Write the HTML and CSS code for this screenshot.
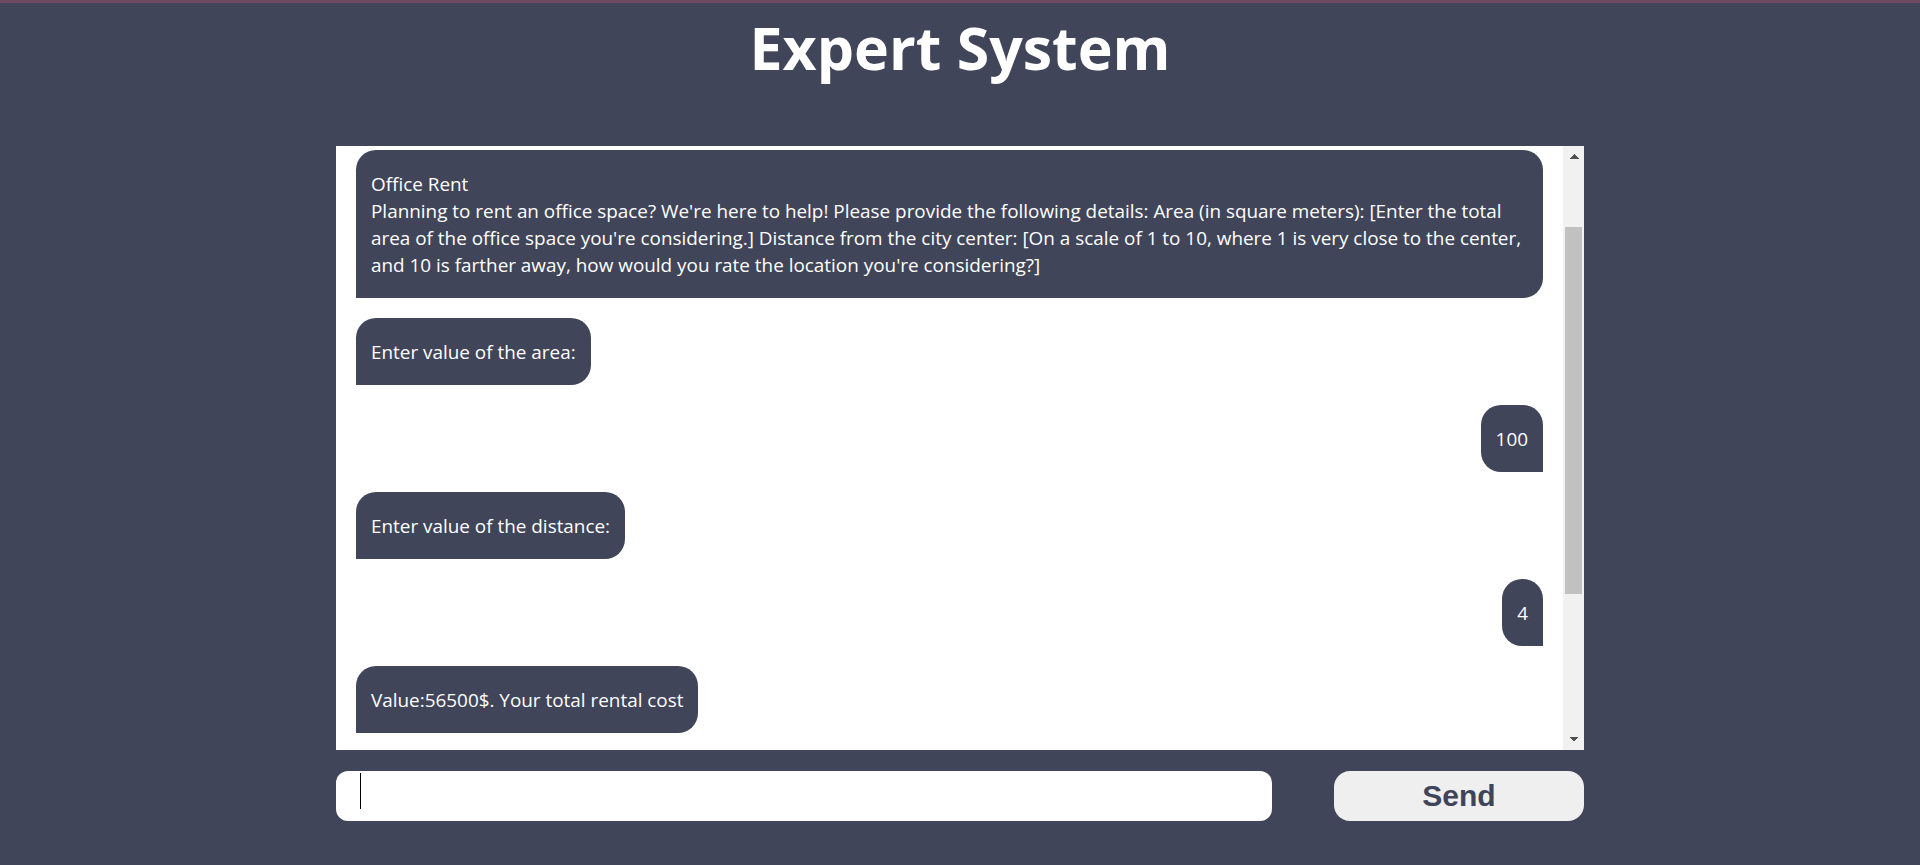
FILE: index.html
```html
<!DOCTYPE html>
<html lang="en">
<head>
<meta charset="utf-8">
<title>Expert System</title>
<link rel="stylesheet" href="styles.css">
</head>
<body>
<div class="page">
  <h1 class="title">Expert System</h1>
  <main class="chat">
    <div class="chat-panel">
      <div class="messages">
        <div class="msg bot">
          <div class="msg-title">Office Rent</div>
          <div class="msg-text">Planning to rent an office space? We're here to help! Please provide the following details: Area (in square meters): [Enter the total area of the office space you're considering.] Distance from the city center: [On a scale of 1 to 10, where 1 is very close to the center, and 10 is farther away, how would you rate the location you're considering?]</div>
        </div>
        <div class="msg bot">Enter value of the area:</div>
        <div class="msg user">100</div>
        <div class="msg bot">Enter value of the distance:</div>
        <div class="msg user">4</div>
        <div class="msg bot">Value:56500$. Your total rental cost</div>
      </div>
      <div class="scrollbar" aria-hidden="true">
        <div class="scroll-btn scroll-up"></div>
        <div class="scroll-track"><div class="scroll-thumb"></div></div>
        <div class="scroll-btn scroll-down"></div>
      </div>
    </div>
    <form class="composer" onsubmit="return false">
      <div class="composer-field">
        <input class="composer-input" type="text" aria-label="Message">
        <span class="caret"></span>
      </div>
      <button class="composer-send" type="button">Send</button>
    </form>
  </main>
</div>
</body>
</html>
```

FILE: styles.css
```css
* {
  box-sizing: border-box;
}

html {
  background: #404559;
}

body {
  margin: 0;
  border-top: 3px solid #704860;
  font-family: "Open Sans", "Noto Sans", sans-serif;
}

.page {
  display: flex;
  flex-direction: column;
  align-items: center;
}

.title {
  margin: 4px 0 0;
  color: #ffffff;
  font-size: 59px;
  line-height: 80px;
  font-weight: 700;
  text-align: center;
}

.chat {
  width: 1248px;
  margin-top: 59px;
}

.chat-panel {
  display: flex;
  height: 604px;
  background: #ffffff;
  overflow: hidden;
}

.messages {
  flex: 1;
  min-width: 0;
  display: flex;
  flex-direction: column;
  align-items: flex-start;
  gap: 20px;
  padding: 4px 20px 0;
  overflow: hidden;
}

.msg {
  flex: none;
  max-width: 100%;
  padding: 21px 15px 19px;
  background: #404559;
  color: #ffffff;
  font-size: 18.9px;
  line-height: 27px;
  border-radius: 20px 20px 20px 0;
}

.msg-text {
  margin-right: -3px;
}

.msg.user {
  align-self: flex-end;
  border-radius: 20px 20px 0 20px;
}

.scrollbar {
  flex: none;
  width: 21px;
  display: flex;
  flex-direction: column;
  background: #f1f1f1;
}

.scroll-btn {
  height: 21px;
  flex: none;
}

.scroll-up {
  background: conic-gradient(from 135deg at 50% 0, #505050 90deg, transparent 0) center / 10px 5px no-repeat;
}

.scroll-down {
  background: conic-gradient(from -45deg at 50% 100%, #505050 90deg, transparent 0) center / 10px 5px no-repeat;
}

.scroll-track {
  flex: 1;
  padding: 60px 2px 0;
}

.scroll-thumb {
  height: 367px;
  background: #c1c1c1;
}

.composer {
  display: flex;
  justify-content: space-between;
  margin: 21px 0 0;
}

.composer-field {
  position: relative;
  width: 936px;
  height: 50px;
}

.composer-input {
  width: 100%;
  height: 100%;
  padding: 0 24px;
  border: none;
  border-radius: 12px;
  background: #ffffff;
  font-size: 30px;
  font-family: "Open Sans", sans-serif;
  outline: none;
}

.caret {
  position: absolute;
  left: 24px;
  top: 2px;
  width: 1px;
  height: 36px;
  background: #000000;
}

.composer-send {
  width: 250px;
  height: 50px;
  border: none;
  border-radius: 16px;
  background: #efefef;
  color: #3e4459;
  font: 700 30px "Liberation Sans", Arial, sans-serif;
  cursor: pointer;
}
```
